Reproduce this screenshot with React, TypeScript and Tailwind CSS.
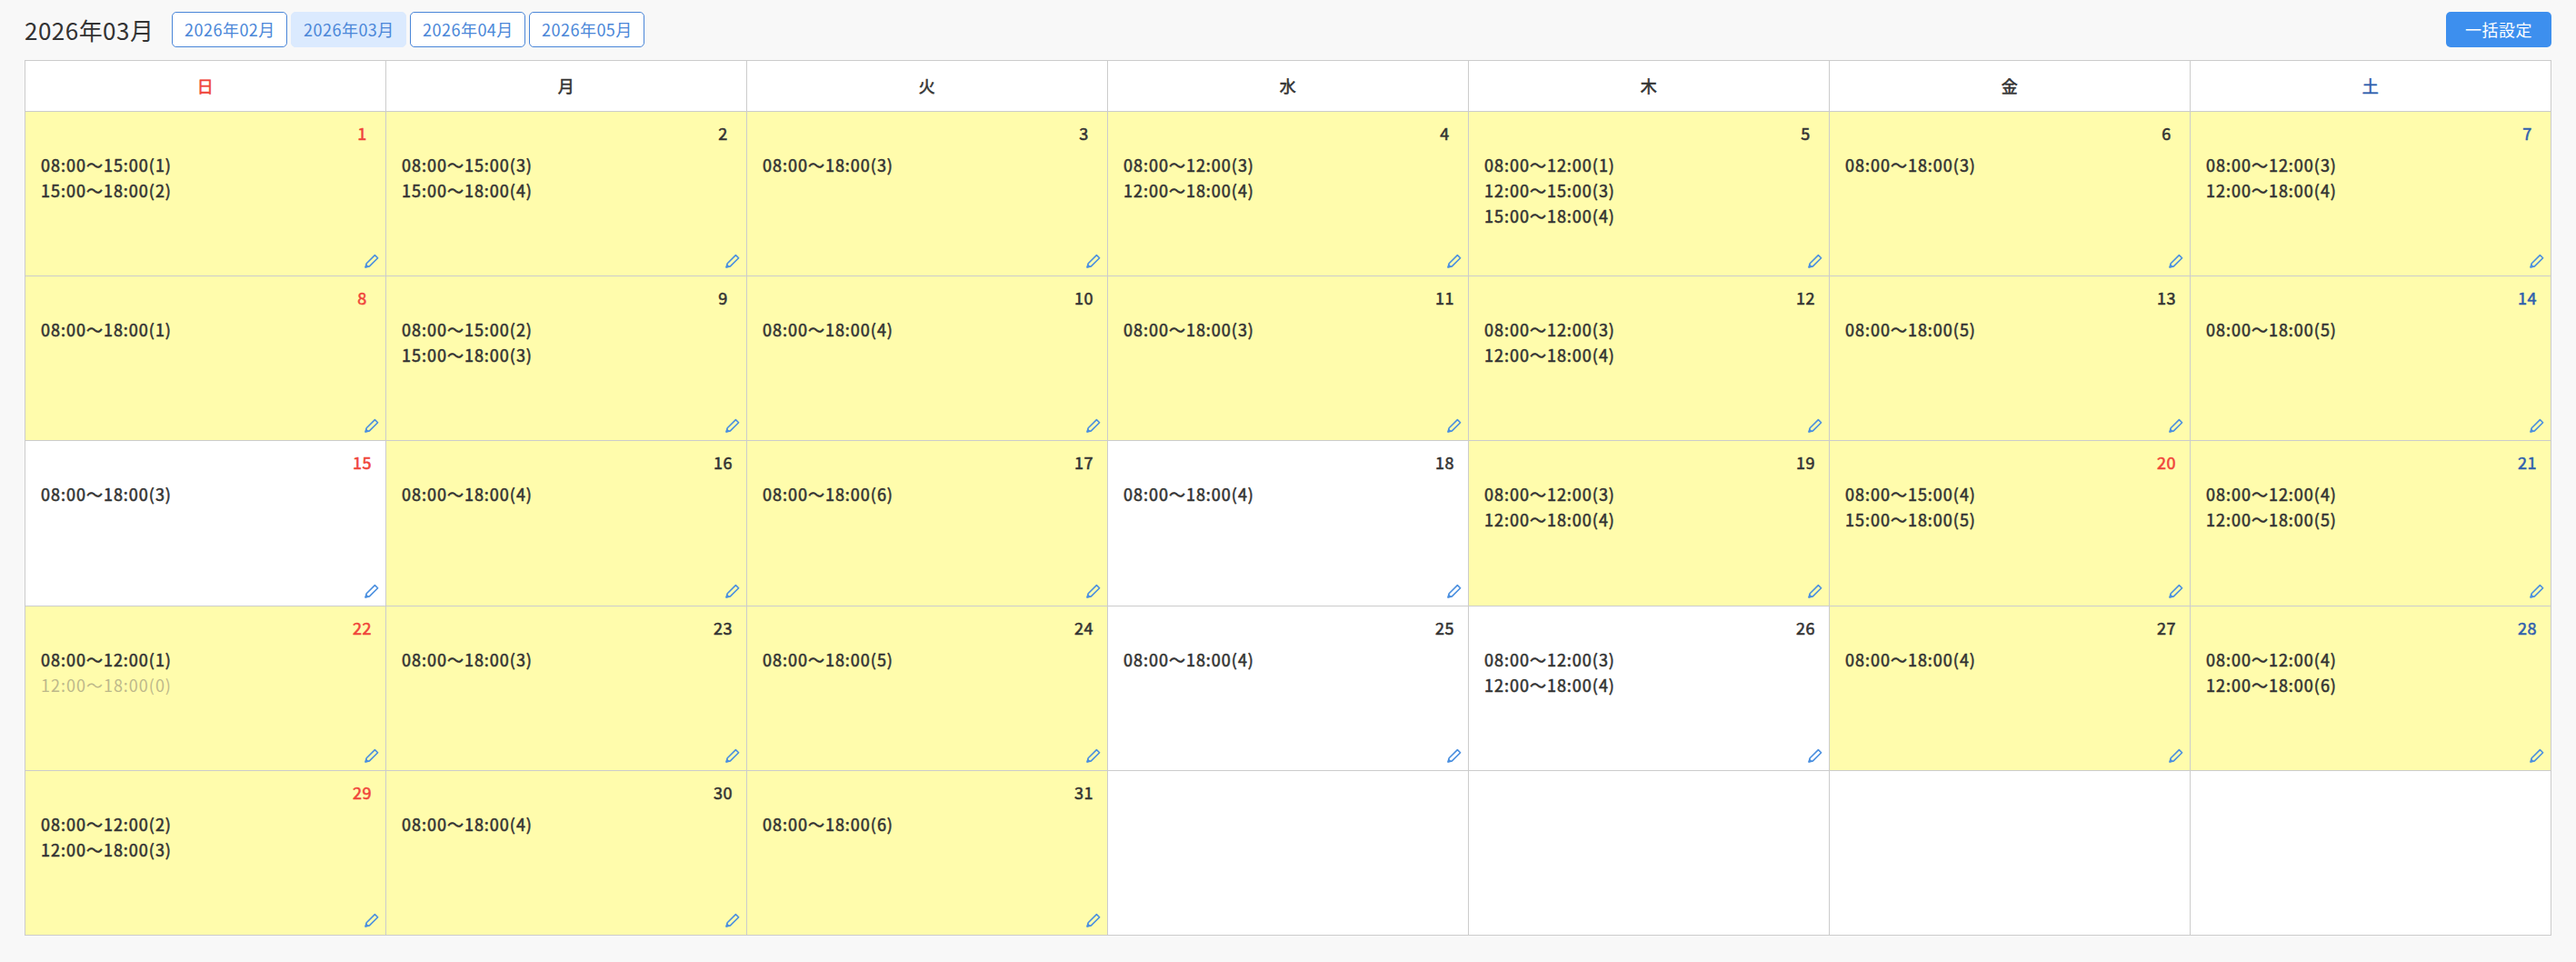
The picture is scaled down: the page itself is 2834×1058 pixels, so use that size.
import React from 'react'

type Day = { d: number; slots: string[]; white?: boolean; holiday?: boolean }

const days: Day[] = [
  { d: 1, slots: ['08:00〜15:00(1)', '15:00〜18:00(2)'] },
  { d: 2, slots: ['08:00〜15:00(3)', '15:00〜18:00(4)'] },
  { d: 3, slots: ['08:00〜18:00(3)'] },
  { d: 4, slots: ['08:00〜12:00(3)', '12:00〜18:00(4)'] },
  { d: 5, slots: ['08:00〜12:00(1)', '12:00〜15:00(3)', '15:00〜18:00(4)'] },
  { d: 6, slots: ['08:00〜18:00(3)'] },
  { d: 7, slots: ['08:00〜12:00(3)', '12:00〜18:00(4)'] },
  { d: 8, slots: ['08:00〜18:00(1)'] },
  { d: 9, slots: ['08:00〜15:00(2)', '15:00〜18:00(3)'] },
  { d: 10, slots: ['08:00〜18:00(4)'] },
  { d: 11, slots: ['08:00〜18:00(3)'] },
  { d: 12, slots: ['08:00〜12:00(3)', '12:00〜18:00(4)'] },
  { d: 13, slots: ['08:00〜18:00(5)'] },
  { d: 14, slots: ['08:00〜18:00(5)'] },
  { d: 15, slots: ['08:00〜18:00(3)'], white: true },
  { d: 16, slots: ['08:00〜18:00(4)'] },
  { d: 17, slots: ['08:00〜18:00(6)'] },
  { d: 18, slots: ['08:00〜18:00(4)'], white: true },
  { d: 19, slots: ['08:00〜12:00(3)', '12:00〜18:00(4)'] },
  { d: 20, slots: ['08:00〜15:00(4)', '15:00〜18:00(5)'], holiday: true },
  { d: 21, slots: ['08:00〜12:00(4)', '12:00〜18:00(5)'] },
  { d: 22, slots: ['08:00〜12:00(1)', '12:00〜18:00(0)'] },
  { d: 23, slots: ['08:00〜18:00(3)'] },
  { d: 24, slots: ['08:00〜18:00(5)'] },
  { d: 25, slots: ['08:00〜18:00(4)'], white: true },
  { d: 26, slots: ['08:00〜12:00(3)', '12:00〜18:00(4)'], white: true },
  { d: 27, slots: ['08:00〜18:00(4)'] },
  { d: 28, slots: ['08:00〜12:00(4)', '12:00〜18:00(6)'] },
  { d: 29, slots: ['08:00〜12:00(2)', '12:00〜18:00(3)'] },
  { d: 30, slots: ['08:00〜18:00(4)'] },
  { d: 31, slots: ['08:00〜18:00(6)'] },
]

const weekdays = ['日', '月', '火', '水', '木', '金', '土']

const PencilIcon = () => (
  <svg width="16" height="16" viewBox="0 0 16 16" fill="none" stroke="#4a8fdf" strokeWidth="1.6" strokeLinejoin="round">
    <path d="M1 15 L2.2 10.8 L11.4 1.6 L14.6 4.8 L5.4 13.9 Z" />
    <path d="M1 15 L1.9 11.8 L4.4 14.2 Z" fill="#4a8fdf" strokeWidth="0.8" />
  </svg>
)

const MonthButton = ({ label, active }: { label: string; active?: boolean }) => (
  <button
    className={
      active
        ? 'h-[39px] w-[127px] rounded-[5px] border border-[#dbeafe] bg-[#dbeafe] text-[18px] text-[#4a86d8]'
        : 'h-[39px] w-[127px] rounded-[5px] border border-[#4a86d8] bg-white text-[18px] text-[#4a86d8]'
    }
  >
    {label}
  </button>
)

const DayCell = ({ day, col }: { day: Day; col: number }) => {
  let numColor = 'text-[#333333]'
  if (col === 0 || day.holiday) numColor = 'text-[#f0443a]'
  if (col === 6) numColor = 'text-[#2f5fae]'
  return (
    <div
      className={
        day.white
          ? 'relative h-[181.2px] border-r border-b border-[#cccccc] bg-white pr-[10px] pl-[17px] pt-[9px]'
          : 'relative h-[181.2px] border-r border-b border-[#cccccc] bg-[#fffcac] pr-[10px] pl-[17px] pt-[9px]'
      }
    >
      <div className="flex justify-end">
        <div className={`w-[31px] text-center text-[18px] leading-[28px] [-webkit-text-stroke:0.55px] ${numColor}`}>
          {day.d}
        </div>
      </div>
      <div className="mt-[7px]">
        {day.slots.map((s) => (
          <div
            key={s}
            className={
              s.endsWith('(0)')
                ? 'text-[18px] leading-[28px] tracking-[0.055em] text-[#bdb88a]'
                : 'text-[18px] leading-[28px] tracking-[0.055em] text-[#333333] [-webkit-text-stroke:0.55px]'
            }
          >
            {s}
          </div>
        ))}
      </div>
      <span className="absolute right-[7px] bottom-[8px] flex">
        <PencilIcon />
      </span>
    </div>
  )
}

export default function App() {
  const cells: (Day | null)[] = [...days, null, null, null, null]
  return (
    <div
      className="min-h-[1058px] bg-[#f8f8f8] px-[27px] pt-[13px] tracking-[0.03em] text-[#333333]"
      style={{ fontFamily: '"Noto Sans CJK JP", "Noto Sans", sans-serif' }}
    >
      <div className="mb-[14px] flex h-[39px] items-center justify-between">
        <div className="flex items-center">
          <h1 className="mr-[20px] text-[26px] font-normal">2026年03月</h1>
          <div className="flex gap-[4px]">
            <MonthButton label="2026年02月" />
            <MonthButton label="2026年03月" active />
            <MonthButton label="2026年04月" />
            <MonthButton label="2026年05月" />
          </div>
        </div>
        <button className="h-[39px] w-[116px] rounded-[5px] bg-[#3d8fee] text-[18px] text-white">一括設定</button>
      </div>
      <div className="grid grid-cols-7 border-t border-l border-[#cccccc]">
        {weekdays.map((w, i) => (
          <div
            key={w}
            className={
              i === 0
                ? 'flex h-[56px] items-center justify-center border-r border-b border-[#cccccc] bg-white pb-[1px] text-[18px] text-[#f0443a] [-webkit-text-stroke:0.55px]'
                : i === 6
                  ? 'flex h-[56px] items-center justify-center border-r border-b border-[#cccccc] bg-white pb-[1px] text-[18px] text-[#2f5fae] [-webkit-text-stroke:0.55px]'
                  : 'flex h-[56px] items-center justify-center border-r border-b border-[#cccccc] bg-white pb-[1px] text-[18px] text-[#333333] [-webkit-text-stroke:0.55px]'
            }
          >
            {w}
          </div>
        ))}
        {cells.map((c, i) =>
          c ? (
            <DayCell key={c.d} day={c} col={i % 7} />
          ) : (
            <div key={`empty-${i}`} className="h-[181.2px] border-r border-b border-[#cccccc] bg-white" />
          ),
        )}
      </div>
    </div>
  )
}
